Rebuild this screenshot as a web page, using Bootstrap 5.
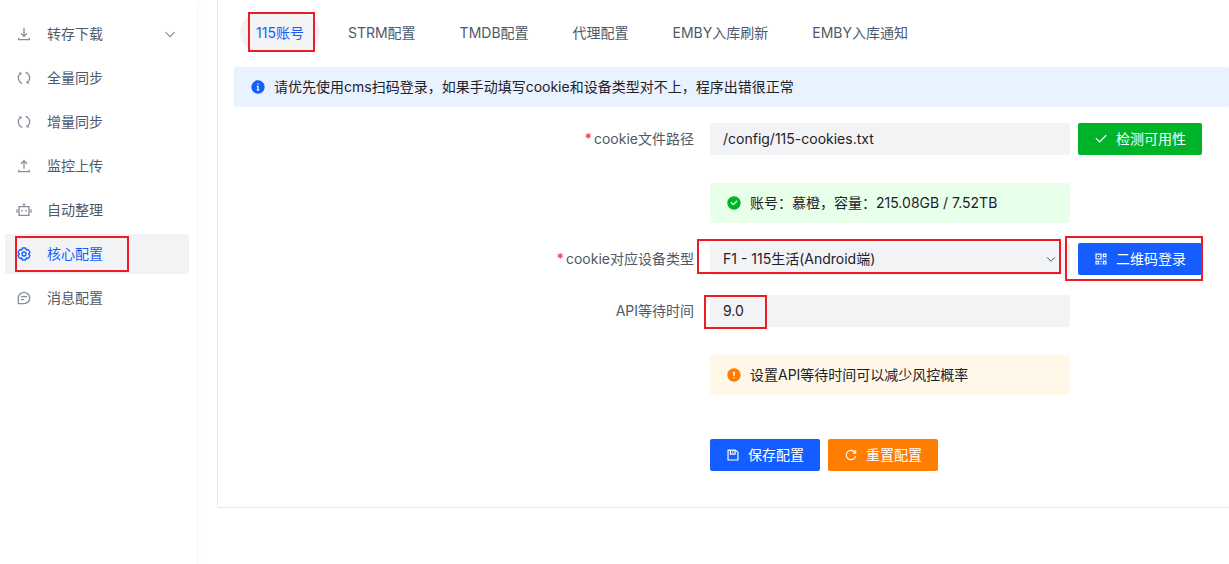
<!DOCTYPE html>
<html lang="zh-CN">
<head>
<meta charset="utf-8">
<meta name="viewport" content="width=device-width, initial-scale=1">
<title>核心配置</title>
<link href="https://cdn.jsdelivr.net/npm/bootstrap@5.3.0/dist/css/bootstrap.min.css" rel="stylesheet">
<style>
  :root { --brand: #165dff; --ok: #00b42a; --warn: #ff7d00; --ink: #1d2129; --ink-2: #4e5969; --ink-3: #86909c; --fill: #f2f3f5; }
  body { font-family: Inter, "Noto Sans CJK SC", sans-serif; font-size: 14px; line-height: 22px; color: var(--ink); background: #fff; }
  .ico { width: 14px; height: 14px; flex: none; fill: none; stroke: currentColor; stroke-width: 4; }
  .ico-lg { width: 16px; height: 16px; }
  .solid { fill: currentColor; stroke: none; }

  .side { width: 197px; flex: none; padding: 14px 8px 14px 5px; box-shadow: 0 2px 5px rgba(0, 0, 0, .08); }
  .side .nav-link { height: 40px; padding: 0 12px 0 11px; gap: 15px; border-radius: 2px; color: var(--ink-2); }
  .side .ico { color: var(--ink-3); }
  .side .active { background: var(--fill); }
  .side .active, .side .active .ico { color: var(--brand); }

  .panel { margin-left: 20px; padding: 14px 0 36px 16px; border: solid #e5e6eb; border-width: 0 0 1px 1px; border-radius: 0 0 0 2px; }
  .tabs { gap: 12px; padding-left: 6px; margin-bottom: 15px; }
  .tabs .nav-link { height: 38px; padding: 0 16px; line-height: 38px; border-radius: 19px; color: var(--ink-2); }
  .tabs .nav-link.active { background: var(--fill); color: var(--brand); }

  .note { height: 40px; padding: 0 16px; gap: 8px; border-radius: 2px; }
  .note-info { background: #e8f3ff; }
  .note-info .ico { color: var(--brand); }
  .note-ok { background: #e8ffea; }
  .note-ok .ico { color: var(--ok); }
  .note-warn { background: #fff7e8; }
  .note-warn .ico { color: var(--warn); }

  .line { display: grid; grid-template-columns: minmax(0, 1fr) 360px 159px; align-items: center; margin-bottom: 20px; }
  .line-tight { margin-bottom: 28px; }
  .line > label { padding-right: 16px; text-align: right; color: var(--ink-2); }
  .line > label span { margin-right: 2px; font-weight: 600; color: #f53f3f; }
  .mid { grid-column: 2; }
  .side-btn { padding-left: 8px; }
  .line .form-control, .line .form-select { height: 32px; padding: 0 13px; font-size: 14px; line-height: 32px; border: 0; border-radius: 2px; background-color: var(--fill); color: var(--ink); }
  .line .form-select { background-image: url("data:image/svg+xml,%3Csvg xmlns='http://www.w3.org/2000/svg' viewBox='0 0 48 48' fill='none' stroke='%234e5969' stroke-width='4'%3E%3Cpath d='M39.6 17.443 24.043 33 8.487 17.443'/%3E%3C/svg%3E"); background-position: right 13px center; background-size: 12px 12px; }

  .act { height: 32px; padding: 0 16px; gap: 8px; border: 0; border-radius: 2px; font-size: 14px; line-height: 22px; color: #fff; display: inline-flex; align-items: center; }
  .act:hover { color: #fff; }
  .act-brand, .act-brand:hover { background: var(--brand); }
  .act-ok, .act-ok:hover { background: var(--ok); }
  .act-warn, .act-warn:hover { background: var(--warn); }

  /* red frames that call out the settings to fill in */
  .frame { position: absolute; border: 2px solid #ed1c24; pointer-events: none; }
  .frame-menu { inset: 2px 60px 2px 10px; }
  .frame-tab { inset: -2px 5px 0 8px; }
  .frame-device { inset: -4px 9px 1px -13px; }
  .frame-login { inset: -7px -1px -6px -13px; }
  .frame-wait { inset: 0 auto -2px -6px; width: 63px; }
</style>
</head>
<body>
<div class="d-flex min-vh-100 overflow-hidden">
  <aside class="side">
    <nav class="nav flex-column gap-1">
      <a href="#" class="nav-link d-flex align-items-center">
        <svg class="ico ico-lg" viewBox="0 0 48 48"><path d="m33.072 22.071-9.07 9.071-9.072-9.07M24 5v26m16 4v6H8v-6"/></svg>
        转存下载
        <svg class="ico ms-auto" viewBox="0 0 48 48"><path d="M39.6 17.443 24.043 33 8.487 17.443"/></svg>
      </a>
      <a href="#" class="nav-link d-flex align-items-center">
        <svg class="ico ico-lg" viewBox="0 0 48 48"><path d="M11.98 11.703c-6.64 6.64-6.64 17.403 0 24.042a16.922 16.922 0 0 0 6.942 4.2M36.017 35.741c6.64-6.639 6.64-17.402 0-24.041A16.922 16.922 0 0 0 29.075 7.5M14.81 11.982l-2.828-2.828h2.829v2.828ZM33.192 36.02l2.828 2.829h-2.828V36.02Z"/></svg>
        全量同步
      </a>
      <a href="#" class="nav-link d-flex align-items-center">
        <svg class="ico ico-lg" viewBox="0 0 48 48"><path d="M11.98 11.703c-6.64 6.64-6.64 17.403 0 24.042a16.922 16.922 0 0 0 6.942 4.2M36.017 35.741c6.64-6.639 6.64-17.402 0-24.041A16.922 16.922 0 0 0 29.075 7.5M14.81 11.982l-2.828-2.828h2.829v2.828ZM33.192 36.02l2.828 2.829h-2.828V36.02Z"/></svg>
        增量同步
      </a>
      <a href="#" class="nav-link d-flex align-items-center">
        <svg class="ico ico-lg" viewBox="0 0 48 48"><path d="M14.93 17.071 24.001 8l9.071 9.071M24 32V8m16 27v6H8v-6"/></svg>
        监控上传
      </a>
      <a href="#" class="nav-link d-flex align-items-center">
        <svg class="ico ico-lg" viewBox="0 0 48 48"><path d="M9 14h30v26H9zM24 14V7M20 7h8M3 22v10M45 22v10M18 24v5M30 24v5"/></svg>
        自动整理
      </a>
      <a href="#" class="nav-link d-flex align-items-center position-relative active" aria-current="page">
        <svg class="ico ico-lg" viewBox="0 0 48 48"><path d="M18.797 6.732A1 1 0 0 1 19.76 6h8.48a1 1 0 0 1 .964.732l1.285 4.628a1 1 0 0 0 1.213.7l4.651-1.2a1 1 0 0 1 1.116.468l4.24 7.344a1 1 0 0 1-.153 1.2L38.193 23.3a1 1 0 0 0 0 1.402l3.364 3.427a1 1 0 0 1 .153 1.2l-4.24 7.344a1 1 0 0 1-1.116.468l-4.65-1.2a1 1 0 0 0-1.214.7l-1.285 4.628a1 1 0 0 1-.964.732h-8.48a1 1 0 0 1-.963-.732L17.51 36.64a1 1 0 0 0-1.213-.7l-4.65 1.2a1 1 0 0 1-1.116-.468l-4.24-7.344a1 1 0 0 1 .153-1.2L9.809 24.7a1 1 0 0 0 0-1.402l-3.364-3.427a1 1 0 0 1-.153-1.2l4.24-7.344a1 1 0 0 1 1.116-.468l4.65 1.2a1 1 0 0 0 1.213-.7l1.286-4.628Z"/><circle cx="24" cy="24" r="6"/></svg>
        核心配置
        <span class="frame frame-menu"></span>
      </a>
      <a href="#" class="nav-link d-flex align-items-center">
        <svg class="ico ico-lg" viewBox="0 0 48 48"><path d="M15 20h18m-18 9h9M7 41h17.63C33.67 41 41 33.67 41 24.63V24c0-9.389-7.611-17-17-17S7 14.611 7 24v17Z"/></svg>
        消息配置
      </a>
    </nav>
  </aside>

  <main class="flex-grow-1">
    <section class="panel">
      <nav class="nav tabs">
        <a href="#" class="nav-link position-relative active" aria-current="page">115账号<span class="frame frame-tab"></span></a>
        <a href="#" class="nav-link">STRM配置</a>
        <a href="#" class="nav-link">TMDB配置</a>
        <a href="#" class="nav-link">代理配置</a>
        <a href="#" class="nav-link">EMBY入库刷新</a>
        <a href="#" class="nav-link">EMBY入库通知</a>
      </nav>

      <div class="note note-info d-flex align-items-center mb-3" role="alert">
        <svg class="ico ico-lg solid" viewBox="0 0 48 48"><path fill-rule="evenodd" d="M24 44c11.046 0 20-8.954 20-20S35.046 4 24 4 4 12.954 4 24s8.954 20 20 20Zm-2-30a1 1 0 0 1 1-1h2a1 1 0 0 1 1 1v2a1 1 0 0 1-1 1h-2a1 1 0 0 1-1-1v-2Zm0 17h-1a1 1 0 0 0-1 1v2a1 1 0 0 0 1 1h6a1 1 0 0 0 1-1v-2a1 1 0 0 0-1-1h-1V21a1 1 0 0 0-1-1h-4a1 1 0 0 0-1 1v2a1 1 0 0 0 1 1h1v7Z"/></svg>
        <span>请优先使用cms扫码登录，如果手动填写cookie和设备类型对不上，程序出错很正常</span>
      </div>

      <form>
        <div class="line line-tight">
          <label for="path"><span>*</span>cookie文件路径</label>
          <input id="path" type="text" class="form-control" value="/config/115-cookies.txt">
          <div class="side-btn">
            <button type="button" class="btn act act-ok"><svg class="ico" viewBox="0 0 48 48"><path d="M41.678 11.05 19.05 33.678 6.322 20.95"/></svg>检测可用性</button>
          </div>
        </div>
        <div class="line">
          <div class="note note-ok mid d-flex align-items-center" role="status">
            <svg class="ico ico-lg solid" viewBox="0 0 48 48"><path fill-rule="evenodd" d="M24 44c11.046 0 20-8.954 20-20S35.046 4 24 4 4 12.954 4 24s8.954 20 20 20Zm10.207-24.379a1 1 0 0 0 0-1.414l-1.414-1.414a1 1 0 0 0-1.414 0L22 26.172l-4.878-4.88a1 1 0 0 0-1.415 0l-1.414 1.415a1 1 0 0 0 0 1.414l7 7a1 1 0 0 0 1.414 0l11.5-11.5Z"/></svg>
            <span>账号：慕橙，容量：215.08GB / 7.52TB</span>
          </div>
        </div>
        <div class="line">
          <label for="device"><span>*</span>cookie对应设备类型</label>
          <div class="position-relative">
            <select id="device" class="form-select"><option>F1 - 115生活(Android端)</option></select>
            <span class="frame frame-device"></span>
          </div>
          <div class="side-btn">
            <button type="button" class="btn act act-brand position-relative"><svg class="ico" viewBox="0 0 48 48"><path d="M7 7h17v17H7zM7 32h9v9H7zM32 7h9v9h-9zM32 32h9v9h-9zM13.500 15.500h4M30 24h4M39 24h4M24 30v4M24 39v4"/></svg>二维码登录<span class="frame frame-login"></span></button>
          </div>
        </div>
        <div class="line line-tight">
          <label for="wait">API等待时间</label>
          <div class="position-relative">
            <input id="wait" type="text" class="form-control" value="9.0">
            <span class="frame frame-wait"></span>
          </div>
        </div>
        <div class="line">
          <div class="note note-warn mid d-flex align-items-center" role="status">
            <svg class="ico ico-lg solid" viewBox="0 0 48 48"><path fill-rule="evenodd" d="M24 44c11.046 0 20-8.954 20-20S35.046 4 24 4 4 12.954 4 24s8.954 20 20 20Zm-2-11a1 1 0 0 0 1 1h2a1 1 0 0 0 1-1v-2a1 1 0 0 0-1-1h-2a1 1 0 0 0-1 1v2Zm0-19h4a1 1 0 0 1 1 1l-1 12h-4l-1-12a1 1 0 0 1 1-1Z"/></svg>
            <span>设置API等待时间可以减少风控概率</span>
          </div>
        </div>
        <div class="line mb-0 pt-4">
          <div class="mid d-flex gap-2">
            <button type="submit" class="btn act act-brand"><svg class="ico" viewBox="0 0 48 48"><path d="M7 7h25l9 8v26H7zM15 7v14h16V7M23 11v5"/></svg>保存配置</button>
            <button type="reset" class="btn act act-warn"><svg class="ico" viewBox="0 0 48 48"><path d="M38.837 18C36.463 12.136 30.715 8 24 8 15.163 8 8 15.163 8 24s7.163 16 16 16c7.455 0 13.72-5.1 15.496-12M40 8v10H30"/></svg>重置配置</button>
          </div>
        </div>
      </form>
    </section>
  </main>
</div>
<script src="https://cdn.jsdelivr.net/npm/bootstrap@5.3.0/dist/js/bootstrap.bundle.min.js"></script>
</body>
</html>
